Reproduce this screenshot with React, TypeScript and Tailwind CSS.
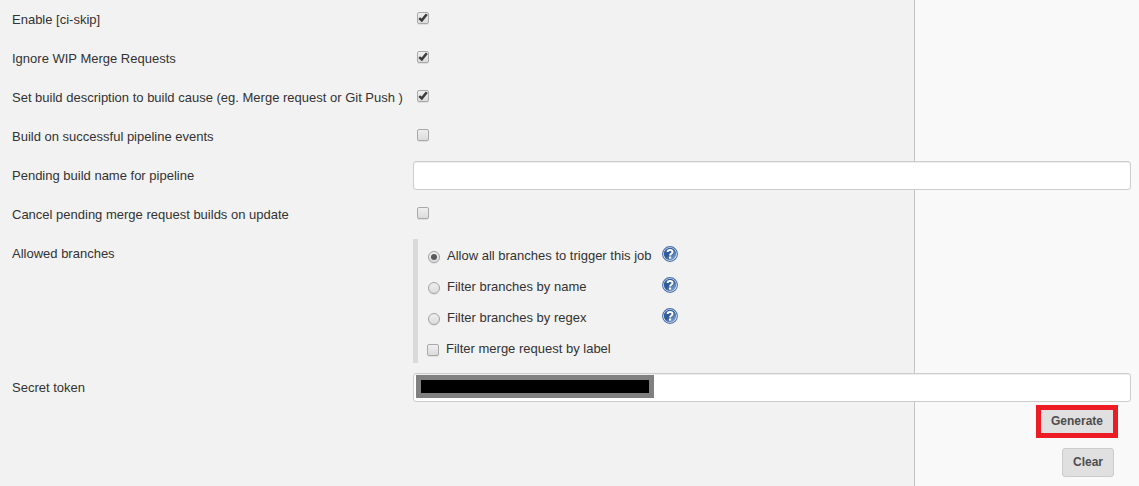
import React from 'react';
import { clsx } from 'clsx';

interface CheckboxProps {
  checked?: boolean;
  className?: string;
}

const Checkbox: React.FC<CheckboxProps> = ({ checked, className }) => (
  <span
    role="checkbox"
    aria-checked={!!checked}
    className={clsx(
      'block h-3 w-3 shrink-0 rounded-[2px] border border-[#a9a9a9] bg-linear-to-b from-[#efefef] to-[#dcdcdc] shadow-[0_1px_0_rgba(0,0,0,0.08)]',
      className
    )}
  >
    {checked && (
      <svg viewBox="0 0 10 10" className="block h-2.5 w-2.5" fill="none" stroke="#3c3c3c" strokeWidth="2.5">
        <path d="M1.2 5.1 L3.8 7.4 L8.8 1.3" />
      </svg>
    )}
  </span>
);

const Radio: React.FC<{ checked?: boolean }> = ({ checked }) => (
  <span
    role="radio"
    aria-checked={!!checked}
    className="mt-3 ml-2.5 flex h-3 w-3 shrink-0 items-center justify-center rounded-full border border-[#a3a3a3] bg-linear-to-b from-[#efefef] to-[#dcdcdc] shadow-[0_1px_0_rgba(0,0,0,0.08)]"
  >
    {checked && <span className="h-1.5 w-1.5 rounded-full bg-[#5a5a5a]" />}
  </span>
);

const HelpIcon: React.FC = () => (
  <svg viewBox="0 0 16 16" className="h-4 w-4">
    <defs>
      <linearGradient id="help-fill" x1="0" y1="0" x2="1" y2="1">
        <stop offset="0" stopColor="#3b69a8" />
        <stop offset="0.45" stopColor="#2c5896" />
        <stop offset="1" stopColor="#9dbbdf" />
      </linearGradient>
    </defs>
    <circle cx="8" cy="8" r="7.4" fill="#f4f8fd" stroke="#4a71aa" strokeWidth="1.1" />
    <circle cx="8" cy="8" r="6.2" fill="url(#help-fill)" />
    <path d="M5.6 6.1 C5.6 3.2 10.5 3.2 10.5 5.9 C10.5 7.6 8.1 7.6 8.1 9.6" fill="none" stroke="#fff" strokeWidth="2" />
    <rect x="7" y="10.5" width="2.2" height="2.1" fill="#fff" />
  </svg>
);

interface RowProps {
  label: string;
  children: React.ReactNode;
}

const Row: React.FC<RowProps> = ({ label, children }) => (
  <div className="flex py-[5px] pr-2 pl-3">
    <div className="w-[401px] shrink-0 pt-[5px] leading-[19px] whitespace-nowrap">{label}</div>
    <div className="min-h-[29px] grow">{children}</div>
  </div>
);

const fieldStyle = 'h-[29px] w-full rounded-[3px] border border-[#ccc] bg-white shadow-[inset_0_1px_1px_rgba(0,0,0,0.075)]';

const branchFilters = [
  { label: 'Allow all branches to trigger this job', checked: true },
  { label: 'Filter branches by name', checked: false },
  { label: 'Filter branches by regex', checked: false },
];

export default function App() {
  return (
    <div className="h-[486px] w-[1139px] overflow-hidden bg-[linear-gradient(to_right,#f2f2f2_914px,#c4c4c4_914px,#c4c4c4_915px,#f9f9f9_915px)] font-['Liberation_Sans',Arial,sans-serif] text-[13px] text-[#333]">
      <Row label="Enable [ci-skip]">
        <Checkbox checked className="mt-[7px] ml-1" />
      </Row>
      <Row label="Ignore WIP Merge Requests">
        <Checkbox checked className="mt-[7px] ml-1" />
      </Row>
      <Row label="Set build description to build cause (eg. Merge request or Git Push )">
        <Checkbox checked className="mt-[7px] ml-1" />
      </Row>
      <Row label="Build on successful pipeline events">
        <Checkbox className="mt-[7px] ml-1" />
      </Row>
      <Row label="Pending build name for pipeline">
        <div role="textbox" className={fieldStyle} />
      </Row>
      <Row label="Cancel pending merge request builds on update">
        <Checkbox className="mt-[7px] ml-1" />
      </Row>

      <Row label="Allowed branches">
        <div className="border-l-5 border-[#dadada]">
          {branchFilters.map((filter) => (
            <div key={filter.label} className="flex h-[31px]">
              <Radio checked={filter.checked} />
              <span className="w-[215px] pt-[7px] pl-[7px] leading-[19px]">{filter.label}</span>
              <span className="pt-[7px] pl-[7px]">
                <HelpIcon />
              </span>
            </div>
          ))}
          <div className="flex h-[31px]">
            <Checkbox className="mt-3 ml-[9px]" />
            <span className="pt-[7px] pl-[7px] leading-[19px]">Filter merge request by label</span>
          </div>
        </div>
      </Row>

      <Row label="Secret token">
        <div role="textbox" className={clsx(fieldStyle, 'pt-px pl-0.5')}>
          <div className="h-[23px] w-[238px] border-5 border-[#808080] bg-black" />
        </div>
      </Row>

      {/* Token actions */}
      <div className="-mt-0.5 flex flex-col items-end text-xs font-bold text-[#4d4d4d]">
        <button className="mr-[21px] h-[33px] w-[82px] border-5 border-[#ed1c24] bg-[#e0e0e0] leading-[23px]">
          Generate
        </button>
        <button className="mt-2.5 mr-[25px] h-[29px] w-[52px] rounded-[3px] border border-[#ccc] bg-[#e0e0e0] pb-0.5">
          Clear
        </button>
      </div>
    </div>
  );
}
